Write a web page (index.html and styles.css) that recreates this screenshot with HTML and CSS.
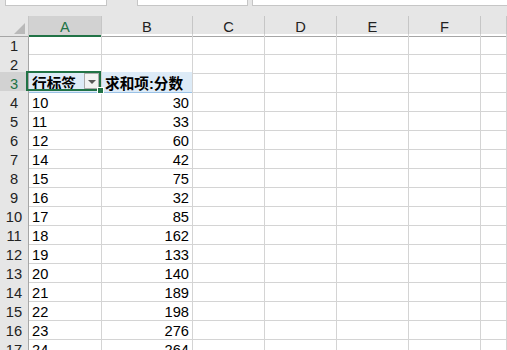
FILE: index.html
```html
<!DOCTYPE html>
<html lang="zh-CN">

<head>
  <meta charset="UTF-8" />
  <title>数据透视表</title>
  <link rel="stylesheet" href="styles.css">
</head>

<body>
  <div class="toolbar">
    <div class="box box-name"></div>
    <div class="box box-mid"></div>
    <div class="box box-formula"></div>
  </div>

  <div class="sheet">
    <div class="row col-heads">
      <div class="corner"><span class="corner-tri"></span></div>
      <div class="active">A</div>
      <div>B</div>
      <div>C</div>
      <div>D</div>
      <div>E</div>
      <div>F</div>
      <div></div>
    </div>

    <div class="row"><div class="rh">1</div><div></div><div></div><div></div><div></div><div></div><div></div><div></div></div>
    <div class="row"><div class="rh">2</div><div></div><div></div><div></div><div></div><div></div><div></div><div></div></div>

    <div class="row pivot-head">
      <div class="rh active">3</div>
      <div class="head-cell label-cell">
        行标签
        <span class="filter-btn"><span class="filter-tri"></span></span>
        <span class="selection"><span class="fill-handle"></span></span>
      </div>
      <div class="head-cell">求和项:分数</div>
      <div></div><div></div><div></div><div></div><div></div>
    </div>

    <div class="row"><div class="rh">4</div><div>10</div><div class="num">30</div><div></div><div></div><div></div><div></div><div></div></div>
    <div class="row"><div class="rh">5</div><div>11</div><div class="num">33</div><div></div><div></div><div></div><div></div><div></div></div>
    <div class="row"><div class="rh">6</div><div>12</div><div class="num">60</div><div></div><div></div><div></div><div></div><div></div></div>
    <div class="row"><div class="rh">7</div><div>14</div><div class="num">42</div><div></div><div></div><div></div><div></div><div></div></div>
    <div class="row"><div class="rh">8</div><div>15</div><div class="num">75</div><div></div><div></div><div></div><div></div><div></div></div>
    <div class="row"><div class="rh">9</div><div>16</div><div class="num">32</div><div></div><div></div><div></div><div></div><div></div></div>
    <div class="row"><div class="rh">10</div><div>17</div><div class="num">85</div><div></div><div></div><div></div><div></div><div></div></div>
    <div class="row"><div class="rh">11</div><div>18</div><div class="num">162</div><div></div><div></div><div></div><div></div><div></div></div>
    <div class="row"><div class="rh">12</div><div>19</div><div class="num">133</div><div></div><div></div><div></div><div></div><div></div></div>
    <div class="row"><div class="rh">13</div><div>20</div><div class="num">140</div><div></div><div></div><div></div><div></div><div></div></div>
    <div class="row"><div class="rh">14</div><div>21</div><div class="num">189</div><div></div><div></div><div></div><div></div><div></div></div>
    <div class="row"><div class="rh">15</div><div>22</div><div class="num">198</div><div></div><div></div><div></div><div></div><div></div></div>
    <div class="row"><div class="rh">16</div><div>23</div><div class="num">276</div><div></div><div></div><div></div><div></div><div></div></div>
    <div class="row"><div class="rh">17</div><div>24</div><div class="num">264</div><div></div><div></div><div></div><div></div><div></div></div>
  </div>
</body>

</html>
```

FILE: styles.css
```css
* {
  box-sizing: border-box;
}

body {
  margin: 0;
  background: #fff;
  font-family: 'Liberation Sans', Arial, 'Noto Sans CJK SC', sans-serif;
  font-size: 14.67px;
  color: #000;
  overflow: hidden;
}

/* strip above the grid */
.toolbar {
  display: flex;
  height: 16px;
  padding-left: 5px;
  background: #e6e6e6;
}

.box {
  height: 6px;
  background: #fff;
  border: 1px solid #c6c6c6;
  border-top: none;
}

.box-name {
  width: 102px;
}

.box-mid {
  width: 111px;
  margin-left: 30px;
}

.box-formula {
  flex: 1;
  margin-left: 4px;
  margin-right: -2px;
}

/* grid */
.row {
  display: grid;
  grid-template-columns: 29px 73px 91px 72px 72px 72px 72px 1fr;
  height: 19px;
}

.row > div {
  border-right: 1px solid #d4d4d4;
  border-bottom: 1px solid #d4d4d4;
  padding: 5px 0 0 3px;
  line-height: 15px;
  white-space: nowrap;
}

.row > .num {
  text-align: right;
  padding-right: 3px;
}

.col-heads {
  height: 18px;
  background: #e6e6e6;
}

.col-heads > div {
  text-align: center;
  padding: 4px 0 0;
  color: #222;
  border-right-color: #c6c6c6;
  border-bottom-color: #a6a6a6;
}

.col-heads > .active {
  background: #d2d2d2;
  color: #217346;
  border-bottom: 2px solid #217346;
}

.corner {
  position: relative;
}

.corner-tri {
  position: absolute;
  right: 3px;
  bottom: 2px;
  width: 0;
  height: 0;
  border-left: 11px solid transparent;
  border-bottom: 11px solid #b9b9b9;
}

.row > .rh {
  background: #e6e6e6;
  color: #222;
  text-align: center;
  padding-left: 0;
  border-right-color: #a6a6a6;
  border-bottom-color: #cfcfcf;
}

.row > .rh.active {
  background: #d2d2d2;
  color: #217346;
}

/* pivot table header */
.pivot-head > .head-cell {
  background: #ddebf7;
  border-bottom-color: #9bc2e6;
  font-weight: bold;
}

.label-cell {
  position: relative;
}

.filter-btn {
  position: absolute;
  top: 1px;
  right: 2px;
  width: 15px;
  height: 16px;
  background: #f2f2f2;
  border: 1px solid #ababab;
}

.filter-tri {
  position: absolute;
  left: 3px;
  top: 6px;
  width: 0;
  height: 0;
  border-left: 4px solid transparent;
  border-right: 4px solid transparent;
  border-top: 4px solid #595959;
}

.selection {
  position: absolute;
  left: -3px;
  top: -1px;
  width: 75px;
  height: 20px;
  border: 2px solid #217346;
}

.fill-handle {
  position: absolute;
  right: -5px;
  bottom: -5px;
  width: 7px;
  height: 7px;
  background: #217346;
  border: 1px solid #fff;
}
```
